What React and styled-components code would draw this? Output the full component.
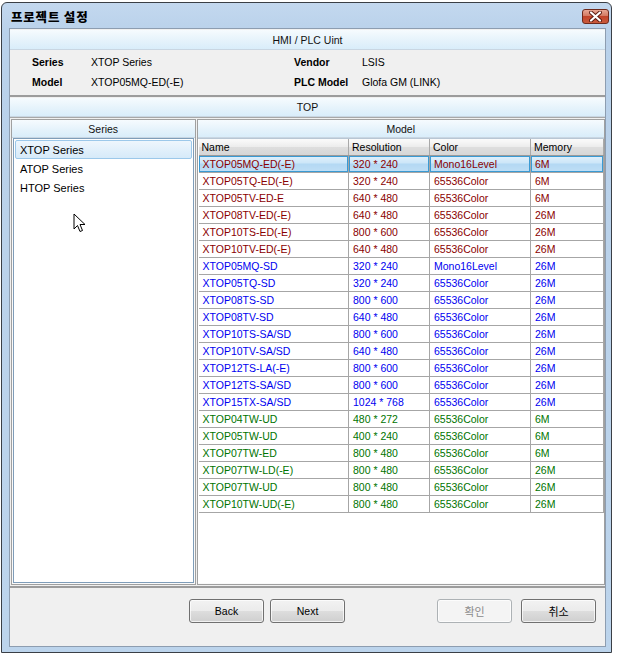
import styled, { createGlobalStyle } from "styled-components";

const GlobalStyle = createGlobalStyle`
  html, body { margin: 0; padding: 0; background: #ffffff; }
  body {
    font-family: "Liberation Sans", Arial, sans-serif;
    font-size: 10.5px;
    color: #000;
  }
  * { box-sizing: border-box; }
`;

const Desktop = styled.div`
  width: 617px;
  height: 657px;
  padding: 2px 0 0 1px;
  background: #ffffff;
`;

const Window = styled.div`
  width: 611px;
  height: 651px;
  border: 1px solid #3a3f46;
  border-radius: 6px 6px 0 0;
  background: linear-gradient(#c3d8ef, #b9d1ea 30px, #bcd4ec);
  display: flex;
  flex-direction: column;
  padding-bottom: 5px;
`;

const TitleBar = styled.div`
  height: 25px;
  display: flex;
  align-items: flex-start;
  justify-content: space-between;
  padding: 0 2px 0 9px;
`;

const Title = styled.div`
  margin-top: 6px;
  font-family: "Noto Sans CJK KR", "Liberation Sans", sans-serif;
  font-weight: 900;
  font-size: 12.5px;
  letter-spacing: 0.8px;
  line-height: 15px;
  color: #000;
`;

const CloseButton = styled.div`
  margin-top: 6px;
  width: 27px;
  height: 15px;
  border: 1px solid #6e2a1c;
  border-radius: 3px;
  background: linear-gradient(#e8a694, #d47a62 45%, #c2442a 50%, #c95a3c);
  display: flex;
  align-items: center;
  justify-content: center;
`;

const Client = styled.div`
  flex: 1;
  margin: 0 5px 0 7px;
  border: 1px solid #8d9db0;
  background: #f0f0f0;
  display: flex;
  flex-direction: column;
`;

const SectionHeader = styled.div`
  height: ${(p) => p.$h || 20}px;
  display: flex;
  align-items: center;
  justify-content: center;
  background: linear-gradient(#f6fbfe, #e4f2fb 60%, #d9edfa);
  border-bottom: 1px solid #c9d6e2;
  font-size: 10.5px;
  color: #111;
`;

const InfoSection = styled.div`
  border-bottom: 2px solid #9c9c9c;
  margin: 1px 0 0;
`;

const InfoGrid = styled.div`
  display: grid;
  grid-template-columns: 59px 203px 68px 1fr;
  grid-auto-rows: 20px;
  align-items: center;
  padding: 2px 0 3px 22px;
`;

const Label = styled.div`
  font-weight: bold;
`;

const Value = styled.div``;

const TopSection = styled.div`
  flex: 1;
  display: flex;
  flex-direction: column;
  margin-top: 1px;
  border-bottom: 2px solid #9c9c9c;
`;

const TopBody = styled.div`
  flex: 1;
  display: flex;
  gap: 1px;
  padding: 1px 0 1px 1px;
  border-top: 1px solid #a8a8a8;
`;

const Panel = styled.div`
  ${(p) => (p.$width ? `width: ${p.$width}px;` : "flex: 1;")}
  border: 1px solid #a0a0a0;
  display: flex;
  flex-direction: column;
  background: #fafafa;
`;

const ListBox = styled.div`
  position: relative;
  flex: 1;
  margin: 0 1px 1px;
  border: 1px solid #7f9db9;
  background: #fff;
  padding: 1px 1px;
`;

const ListItem = styled.div`
  height: 19px;
  display: flex;
  align-items: center;
  padding-left: 4px;
  font-size: 11px;
  border: 1px solid ${(p) => (p.$selected ? "#9cc8ea" : "transparent")};
  border-radius: 2px;
  background: ${(p) =>
    p.$selected ? "linear-gradient(#eef6fd, #d6eaf9)" : "transparent"};
`;

const Cursor = styled.svg`
  position: absolute;
  left: 59px;
  top: 74px;
`;

const TableArea = styled.div`
  flex: 1;
  margin: 0 0 1px 0;
  border-top: 1px solid #b8c6d4;
  background: #fff;
  padding: 0 0 0 1px;
`;

const Table = styled.table`
  border-collapse: collapse;
  table-layout: fixed;
  width: 405px;
`;

const HeadCell = styled.th`
  width: ${(p) => p.$w}px;
  height: 16px;
  padding: 0 0 0 3px;
  text-align: left;
  font-weight: normal;
  font-size: 10.5px;
  background: linear-gradient(#fbfbfb, #ececec 50%, #dedede 51%, #d6d6d6);
  border-right: 1px solid #a9a9a9;
  border-bottom: 1px solid #9a9a9a;
  white-space: nowrap;
`;

const Cell = styled.td`
  height: 17px;
  padding: 0 0 0 4px;
  font-size: 10.5px;
  color: ${(p) => p.$color};
  border-right: 1px solid #a6a6a6;
  border-bottom: 1px solid #a6a6a6;
  white-space: nowrap;
  overflow: hidden;
  ${(p) =>
    p.$selected &&
    `
    background: linear-gradient(#e3f1fc, #cbe5f8 50%, #b3d8f3 51%, #bfdef5);
    box-shadow: inset 0 0 0 1px #3a9ad3;
  `}
`;

const Footer = styled.div`
  height: 58px;
  display: flex;
  align-items: flex-start;
  padding: 11px 9px 0 179px;
  gap: 6px;
`;

const Spacer = styled.div`
  flex: 1;
`;

const Button = styled.button`
  width: 75px;
  height: 24px;
  margin-left: ${(p) => p.$ml || 0}px;
  border: 1px solid ${(p) => (p.disabled ? "#adb2b5" : "#707070")};
  border-radius: 3px;
  background: ${(p) =>
    p.disabled
      ? "#f4f4f4"
      : "linear-gradient(#f2f2f2, #ebebeb 50%, #dddddd 51%, #cfcfcf)"};
  color: ${(p) => (p.disabled ? "#8a8a8a" : "#000")};
  font-family: "Liberation Sans", "Noto Sans CJK KR", sans-serif;
  font-size: ${(p) => (p.$kr ? 11 : 10.5)}px;
  padding: 0;
  box-shadow: inset 0 0 0 1px rgba(255, 255, 255, 0.7);
`;

const RED = "#8a0000";
const BLUE = "#0000f0";
const GREEN = "#007400";

const rows = [
  ["XTOP05MQ-ED(-E)", "320 * 240", "Mono16Level", "6M", RED],
  ["XTOP05TQ-ED(-E)", "320 * 240", "65536Color", "6M", RED],
  ["XTOP05TV-ED-E", "640 * 480", "65536Color", "6M", RED],
  ["XTOP08TV-ED(-E)", "640 * 480", "65536Color", "26M", RED],
  ["XTOP10TS-ED(-E)", "800 * 600", "65536Color", "26M", RED],
  ["XTOP10TV-ED(-E)", "640 * 480", "65536Color", "26M", RED],
  ["XTOP05MQ-SD", "320 * 240", "Mono16Level", "26M", BLUE],
  ["XTOP05TQ-SD", "320 * 240", "65536Color", "26M", BLUE],
  ["XTOP08TS-SD", "800 * 600", "65536Color", "26M", BLUE],
  ["XTOP08TV-SD", "640 * 480", "65536Color", "26M", BLUE],
  ["XTOP10TS-SA/SD", "800 * 600", "65536Color", "26M", BLUE],
  ["XTOP10TV-SA/SD", "640 * 480", "65536Color", "26M", BLUE],
  ["XTOP12TS-LA(-E)", "800 * 600", "65536Color", "26M", BLUE],
  ["XTOP12TS-SA/SD", "800 * 600", "65536Color", "26M", BLUE],
  ["XTOP15TX-SA/SD", "1024 * 768", "65536Color", "26M", BLUE],
  ["XTOP04TW-UD", "480 * 272", "65536Color", "6M", GREEN],
  ["XTOP05TW-UD", "400 * 240", "65536Color", "6M", GREEN],
  ["XTOP07TW-ED", "800 * 480", "65536Color", "6M", GREEN],
  ["XTOP07TW-LD(-E)", "800 * 480", "65536Color", "26M", GREEN],
  ["XTOP07TW-UD", "800 * 480", "65536Color", "26M", GREEN],
  ["XTOP10TW-UD(-E)", "800 * 480", "65536Color", "26M", GREEN],
];

const columns = [
  ["Name", 150],
  ["Resolution", 81],
  ["Color", 101],
  ["Memory", 73],
];

function App() {
  return (
    <>
      <GlobalStyle />
      <Desktop>
        <Window>
          <TitleBar>
            <Title>프로젝트 설정</Title>
            <CloseButton>
              <svg width="13" height="11" viewBox="0 0 13 11">
                <path
                  d="M2 1.5 L11 9.5 M11 1.5 L2 9.5"
                  stroke="#5a1a10"
                  strokeWidth="4"
                  strokeLinecap="round"
                />
                <path
                  d="M2 1.5 L11 9.5 M11 1.5 L2 9.5"
                  stroke="#ffffff"
                  strokeWidth="2.2"
                  strokeLinecap="round"
                />
              </svg>
            </CloseButton>
          </TitleBar>
          <Client>
            <InfoSection>
              <SectionHeader $h={20}>HMI / PLC Uint</SectionHeader>
              <InfoGrid>
                <Label>Series</Label>
                <Value>XTOP Series</Value>
                <Label>Vendor</Label>
                <Value>LSIS</Value>
                <Label>Model</Label>
                <Value>XTOP05MQ-ED(-E)</Value>
                <Label>PLC Model</Label>
                <Value>Glofa GM (LINK)</Value>
              </InfoGrid>
            </InfoSection>
            <TopSection>
              <SectionHeader $h={19}>TOP</SectionHeader>
              <TopBody>
                <Panel $width={185}>
                  <SectionHeader $h={18}>Series</SectionHeader>
                  <ListBox>
                    <ListItem $selected>XTOP Series</ListItem>
                    <ListItem>ATOP Series</ListItem>
                    <ListItem>HTOP Series</ListItem>
                    <Cursor width="13" height="20" viewBox="0 0 13 20">
                      <path
                        d="M1 1 L1 16 L4.5 12.5 L7 18.5 L9.5 17.5 L7 11.5 L12 11.5 Z"
                        fill="#ffffff"
                        stroke="#000000"
                        strokeWidth="1"
                        strokeLinejoin="miter"
                      />
                    </Cursor>
                  </ListBox>
                </Panel>
                <Panel>
                  <SectionHeader $h={18}>Model</SectionHeader>
                  <TableArea>
                    <Table>
                      <thead>
                        <tr>
                          {columns.map(([name, w]) => (
                            <HeadCell key={name} $w={w}>
                              {name}
                            </HeadCell>
                          ))}
                        </tr>
                      </thead>
                      <tbody>
                        {rows.map((r, i) => (
                          <tr key={r[0]}>
                            {r.slice(0, 4).map((v, j) => (
                              <Cell key={j} $color={r[4]} $selected={i === 0}>
                                {v}
                              </Cell>
                            ))}
                          </tr>
                        ))}
                      </tbody>
                    </Table>
                  </TableArea>
                </Panel>
              </TopBody>
            </TopSection>
            <Footer>
              <Button>Back</Button>
              <Button>Next</Button>
              <Spacer />
              <Button disabled $kr>
                확인
              </Button>
              <Button $kr $ml={3}>
                취소
              </Button>
            </Footer>
          </Client>
        </Window>
      </Desktop>
    </>
  );
}

export default App;
